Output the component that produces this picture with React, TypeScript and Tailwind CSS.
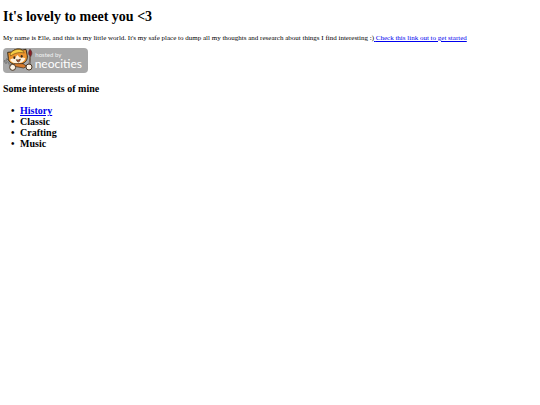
const interests = [
  { name: "History", href: "#history" },
  { name: "Classic" },
  { name: "Crafting" },
  { name: "Music" },
];

function NeocitiesBadge() {
  return (
    <svg
      width="85"
      height="25"
      viewBox="0 0 255 75"
      role="img"
      aria-label="Hosted by Neocities"
    >
      <rect width="255" height="75" rx="12" fill="#a8a8a8" />

      {/* fork */}
      <path d="M4 38l7 8M10 32l6 9M15 43l17 20" fill="none" stroke="#555" strokeWidth="5" />
      <path d="M5 39l6 7M11 34l5 8M15 43l12 14" fill="none" stroke="#ddd" strokeWidth="2" />

      {/* brush */}
      <path d="M82 24L79 53" stroke="#3c3c3c" strokeWidth="5" />
      <path d="M82 24L79 53" stroke="#d09a78" strokeWidth="2" />
      <path d="M81 4c7 7 7 14 2 21-7-3-8-12-2-21z" fill="#8c1c22" stroke="#4b2929" strokeWidth="2" />

      {/* cat */}
      <path
        d="M16 31L14 13l12-1C34 3 48 0 59 6l10-2 3 15c3 12-1 22-12 27-12 6-28 5-37-2-5-4-7-8-7-13z"
        fill="#eb942f"
        stroke="#3a2d1a"
        strokeWidth="3"
      />
      <path
        d="M21 36c4-5 10-5 15-6l7-9 8 8c7-1 12-1 16 2-3 9-9 13-17 14-11 3-23 1-29-9z"
        fill="#fff2dc"
      />
      <path d="M21 18C28 5 47 0 59 8l5 7c-13-3-28-1-41 9z" fill="#f6cf45" stroke="#795116" strokeWidth="2" />
      <ellipse cx="34" cy="29" rx="3" ry="4" fill="#302a25" />
      <ellipse cx="56" cy="25" rx="3" ry="4" fill="#302a25" />
      <path d="M40 35q6 3 12-2-1 9-6 9-4 0-6-7z" fill="#c65735" stroke="#3a2d1a" strokeWidth="2" />
      <path d="M34 47h26l11 8-9 5-28-5z" fill="#d97c2c" stroke="#382719" strokeWidth="2" />
      <circle cx="29" cy="58" r="9" fill="#fff5e7" stroke="#4b3826" strokeWidth="3" />
      <circle cx="78" cy="57" r="9" fill="#fff5e7" stroke="#4b3826" strokeWidth="3" />

      <g fill="#fff" fontFamily="Lato, sans-serif">
        <text x="97" y="28" fontSize="18" opacity="0.85">
          hosted by
        </text>
        <text x="95" y="60" fontSize="36">
          neocities
        </text>
      </g>
    </svg>
  );
}

export default function App() {
  return (
    <main className="bg-white px-[3px] pt-2 font-['Liberation_Serif',serif] text-black">
      <h1 className="text-[14px] leading-[18px] font-bold">
        It's lovely to meet you &lt;3
      </h1>

      <p className="mt-[6px] text-[7px] leading-3">
        My name is Elle, and this is my little world. It's my safe place to dump
        all my thoughts and research about things I find interesting :)
        <a href="#start" className="text-[#0000ee] underline">
          {" "}
          Check this link out to get started
        </a>
      </p>

      <a href="#neocities" className="mt-1 inline-block align-top">
        <NeocitiesBadge />
      </a>

      <h2 className="mt-2 text-[10px] leading-4 font-bold">
        Some interests of mine
      </h2>

      <ul className="mt-2 pl-2 text-[10px] leading-[11px] font-bold">
        {interests.map(({ name, href }) => (
          <li key={name} className="flex before:w-[9px] before:content-['•']">
            {href ? (
              <a href={href} className="text-[#0000ee] underline">
                {name}
              </a>
            ) : (
              name
            )}
          </li>
        ))}
      </ul>
    </main>
  );
}
